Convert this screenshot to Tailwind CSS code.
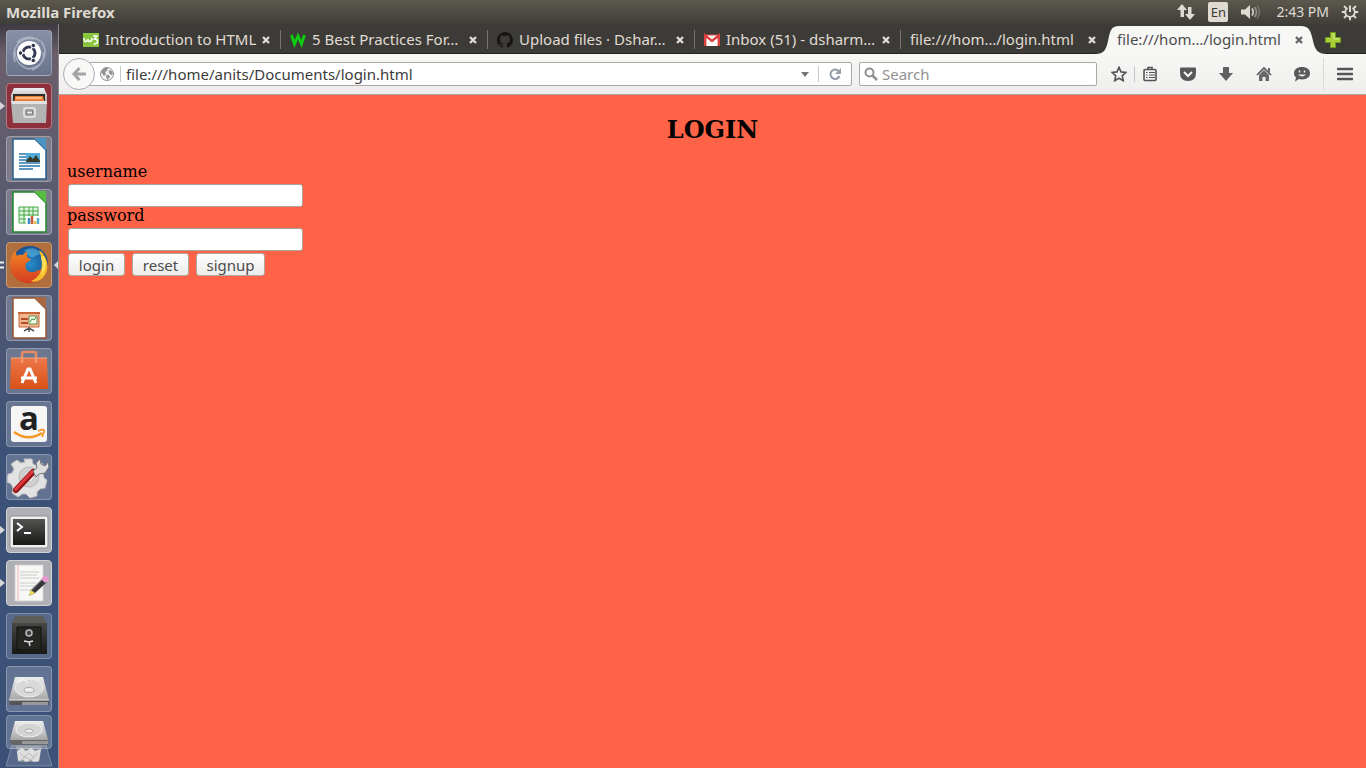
<!DOCTYPE html>
<html lang="en">
<head>
<meta charset="utf-8">
<title>Mozilla Firefox</title>
<script src="https://cdn.jsdelivr.net/npm/@tailwindcss/browser@4"></script>
</head>
<body class="flex h-screen flex-col overflow-hidden font-['Noto_Sans',sans-serif] text-[15px] text-[#3c3c3c]">

<!-- System panel -->
<header class="flex h-6 shrink-0 items-center bg-linear-to-b from-[#5c584f] to-[#403e39] px-1.5 text-[#dfdbd2]">
  <h1 class="flex-1 text-[15px] leading-6 font-bold">Mozilla Firefox</h1>
  <div class="flex items-center">
    <button aria-label="Network" class="mr-3"><svg class="h-5 w-[20px]" viewBox="0 0 20 20" fill="#dfdbd2"><path d="M6 2l5 6H8v7H4.500V8H1zM14 18l-5-6h3V5h3.500v7H19z"/></svg></button>
    <button class="mr-3 h-5 w-5 rounded-xs bg-[#dfdbd2] text-[13px] leading-5 text-[#3c3b37]">En</button>
    <button aria-label="Volume" class="mr-3.5"><svg class="h-5 w-[22px]" viewBox="0 0 22 20" fill="none" stroke-width="1.600"><path fill="#dfdbd2" d="M1 7.500h4l5-4.500v14l-5-4.500H1z"/><path stroke="#dfdbd2" d="M12 6.500q2.500 3.500 0 7"/><path stroke="#99958d" d="M14.500 5q4 5 0 10"/><path stroke="#77746c" d="M17 3.500q5 6.500 0 13"/></svg></button>
    <time class="mr-3 text-[14px] leading-6">2:43 PM</time>
    <button aria-label="System" class="mr-px"><svg class="h-[18px] w-[18px]" viewBox="0 0 18 18" fill="none" stroke="#dfdbd2"><path stroke-width="1.800" d="M6.500 5a4.800 4.800 0 1 0 5 0"/><path stroke-width="2" d="M9 2.500V9M.8 9H4M14 9h3.200M3 3l2.400 2.400M15 3l-2.400 2.400M3 15l2.400-2.400M15 15l-2.400-2.400M9 14v3.200"/></svg></button>
  </div>
</header>

<div class="flex min-h-0 flex-1">

<!-- Launcher -->
<nav aria-label="Launcher" class="relative flex w-[59px] shrink-0 flex-col gap-[7px] overflow-hidden border-r border-[#8d8790] bg-linear-to-b from-[#3e3a42] from-0% via-[#6a5f6a] via-[4%] to-[#3b5178] to-60% pt-1.5 pl-1.5">
  <svg class="absolute h-0 w-0" aria-hidden="true"><defs>
    <linearGradient id="metal" x2="0" y2="1"><stop stop-color="#eee"/><stop offset="1" stop-color="#a6a6a6"/></linearGradient>
    <linearGradient id="dark" x2="0" y2="1"><stop stop-color="#535351"/><stop offset="1" stop-color="#181816"/></linearGradient>
    <linearGradient id="bag" x2="0" y2="1"><stop stop-color="#ed7748"/><stop offset="1" stop-color="#d95118"/></linearGradient>
    <radialGradient id="sky"><stop stop-color="#2590cc"/><stop offset="1" stop-color="#184f91"/></radialGradient>
    <linearGradient id="fox" x2="0" y2="1"><stop stop-color="#f18523"/><stop offset="1" stop-color="#d43b1f"/></linearGradient>
  </defs></svg>

  <button aria-label="Search your computer" class="h-[46px] w-[46px] shrink-0 rounded-sm border border-white/25 bg-linear-to-b from-[#8790a6] to-[#69738c]">
    <svg class="h-11 w-11" viewBox="0 0 44 44" fill="none"><path d="M8 31C3 17 14 5 28 8M34 10c9 12 2 27-13 28M10 12c4-6 15-8 23-2M36 21c2 8-3 15-11 18M8 20c0 9 5 16 14 18" stroke="#c4cad6" stroke-width="1.500" opacity=".65"/><circle cx="22" cy="22" r="12" fill="#fff"/><circle cx="22" cy="22" r="6" stroke="#353b52" stroke-width="3"/><path d="M22 22H10M22 22l6-11M22 22l6 11" stroke="#fff" stroke-width="1.500"/><circle cx="13.500" cy="22" r="2.300" fill="#353b52" stroke="#fff"/><circle cx="26.300" cy="14.500" r="2.300" fill="#353b52" stroke="#fff"/><circle cx="26.300" cy="29.500" r="2.300" fill="#353b52" stroke="#fff"/><circle cx="22" cy="22" r="4.200" fill="#fff"/></svg>
  </button>

  <button aria-label="Files" class="relative h-[46px] w-[46px] shrink-0 rounded-sm border border-[#b77780] bg-[#8d303c]">
    <svg class="h-11 w-11" viewBox="0 0 44 44"><path d="M7 4h30l3 7v8H4v-8z" fill="url(#metal)"/><path d="M6 10h32v10H6z" fill="#332b28"/><path d="M8 12h28l2 8H7z" fill="#ed7d34"/><path d="M9 14h26" stroke="#f8d1a1" stroke-width="1.500"/><path d="M4 18h36l-1 21H6z" fill="#b4b3b3"/><path d="M4 17h36v3H5z" fill="#e2e2e2"/><rect x="17" y="24" width="11" height="9" rx="2" fill="#aaa" stroke="#ececec" stroke-width="1.500"/><path d="M19.500 27h6v3h-6z" fill="#eee" stroke="#777"/></svg>
    <svg class="absolute top-[18px] -left-[7px] h-2 w-[5px]" viewBox="0 0 5 8"><path d="M0 0l5 4-5 4z" fill="#d8d6d8"/></svg>
  </button>

  <button aria-label="LibreOffice Writer" class="h-[46px] w-[46px] shrink-0 rounded-sm border border-white/25 bg-white/20">
    <svg class="h-11 w-11" viewBox="0 0 44 44"><path d="M6 2h22l11 11v29H6z" fill="#fff" stroke="#235f8c" stroke-width="1.500"/><path d="M27 1h12v12z" fill="#4d94c3"/><path d="M12 17h7M12 20h7M12 23h7M12 26h21M12 29h21M12 32h14" stroke="#2876aa" stroke-width="1.700"/><path d="M19 16h14v9H19z" fill="#51abd8"/><path d="M19 24l4-5 3 3 3-4 4 6v1H19z" fill="#363b29"/></svg>
  </button>

  <button aria-label="LibreOffice Calc" class="h-[46px] w-[46px] shrink-0 rounded-sm border border-white/25 bg-white/20">
    <svg class="h-11 w-11" viewBox="0 0 44 44"><path d="M6 2h22l11 11v29H6z" fill="#fff" stroke="#208829" stroke-width="1.500"/><path d="M27 1h12v12z" fill="#56be42"/><path d="M12 17h19v16H12zM12 21h19M12 25h19M12 29h19M17 17v16M22 17v16M26 17v16" fill="#e2f4df" stroke="#42a644"/><path d="M19 26h14v9H19z" fill="#fff"/><path d="M22 34v-6" stroke="#3889c6" stroke-width="2.500"/><path d="M25 34v-8" stroke="#c75b35" stroke-width="2.500"/><path d="M28 34v-3" stroke="#e6b943" stroke-width="2.500"/><path d="M31 34v-6" stroke="#57abc7" stroke-width="2.500"/></svg>
  </button>

  <button aria-label="Firefox" class="relative h-[46px] w-[46px] shrink-0 rounded-sm border border-[#c49b78] bg-[#b06f3d]">
    <svg class="h-11 w-11" viewBox="0 0 44 44"><circle cx="23" cy="21" r="18" fill="url(#sky)"/><path d="M17 8c6-5 14-3 18 4-6-2-6 3-11 2-4 0-3-5-7-6z" fill="#59b9df" opacity=".6"/><path d="M33 8c13 12 9 29-7 32-11 2-22-5-23-17 0-6 2-12 5-15l2 5c2-2 4-1 6-1 1-2 3-3 5-3-2 3-1 4 0 6l3 1c-1 3-5 3-5 5-2 5 2 9 8 8 5-2 6-3 9-2-2 4-6 6-10 6 9 0 14-8 10-23z" fill="url(#fox)"/><path d="M32 7c10 8 12 23 1 30-4 2-7 2-9 1 12-5 13-17 8-31z" fill="#f7bc2c"/><path d="M37 13c3 7 2 14-3 20 2-8 2-13 0-19z" fill="#ffe45b"/></svg>
    <svg class="absolute top-[18px] -left-[7px] h-2 w-[5px]" viewBox="0 0 5 8"><path d="M0 1.500h4M0 6.500h4" stroke="#eee" stroke-width="2"/></svg>
    <svg class="absolute top-[18px] left-[47px] h-2 w-1" viewBox="0 0 4 8"><path d="M4 0L0 4l4 4z" fill="#d8d6d8"/></svg>
  </button>

  <button aria-label="LibreOffice Impress" class="h-[46px] w-[46px] shrink-0 rounded-sm border border-white/25 bg-white/20">
    <svg class="h-11 w-11" viewBox="0 0 44 44"><path d="M6 2h22l11 11v29H6z" fill="#fff" stroke="#97512f" stroke-width="1.500"/><path d="M27 1h12v12z" fill="#a96845"/><path d="M12 17h20v14H12z" fill="#f3b590" stroke="#c86638"/><path d="M11 17h22" stroke="#c86638" stroke-width="2"/><path d="M14 23h7M14 27h7" stroke="#b34d27" stroke-width="2"/><path d="M22 20h8v8h-8z" fill="#f5ffe8" stroke="#638d53"/><path d="M23 26l2-3 2 1 2-3" fill="none" stroke="#318745"/><path d="M17 35l5-3 5 3M22 31v5" fill="none" stroke="#555" stroke-width="1.500"/></svg>
  </button>

  <button aria-label="Ubuntu Software Center" class="h-[46px] w-[46px] shrink-0 rounded-sm border border-white/25 bg-white/20">
    <svg class="h-11 w-11" viewBox="0 0 44 44"><path d="M15 13V5q0-2 2-2h10q2 0 2 2v8" fill="none" stroke="#e98a61" stroke-width="2.500"/><path d="M4 9h36l1 31H3z" fill="url(#bag)"/><path d="M15 9v5M29 9v5" stroke="#f0946c" stroke-width="2.500"/><path d="M4 9h36" stroke="#f3a781"/><path d="M15 34l6-14h2l6 14M14 29h16" fill="none" stroke="#fff" stroke-width="3"/></svg>
  </button>

  <button aria-label="Amazon" class="h-[46px] w-[46px] shrink-0 rounded-sm border border-white/25 bg-white/20">
    <svg class="h-11 w-11 overflow-visible" viewBox="0 0 44 44"><rect x="4" y="4" width="36" height="36" rx="3" fill="#f6f6f6"/><text x="12" y="28" font-family="Open Sans, sans-serif" font-weight="bold" font-size="33" fill="#222">a</text><path d="M7 30q14 10 28 1" fill="none" stroke="#f49725" stroke-width="2.500"/><path d="M31 29q7-3 6 1l-2 5" fill="none" stroke="#f49725" stroke-width="1.800"/></svg>
  </button>

  <button aria-label="System Settings" class="h-[46px] w-[46px] shrink-0 rounded-sm border border-white/25 bg-white/20">
    <svg class="h-11 w-11" viewBox="0 0 44 44"><path d="M17 4h8l1 5 4 2 5-3 4 6-3 4 1 5 3 2-2 8-5 1-3 3v4l-7 2-4-4h-4l-4 3-6-4 1-5-2-4-4-2 1-8 4-1 2-4-3-5 6-4 4 3 4-1z" fill="#e2e2e2" stroke="#bbb"/><circle cx="22" cy="22" r="10" fill="#cfcfcf" stroke="#b7b7b7"/><circle cx="22" cy="22" r="4" fill="#eee"/><path d="M9 35l17-18" stroke="#8e1316" stroke-width="6" stroke-linecap="round"/><path d="M8.500 34.500l17-18" stroke="#dd383b" stroke-width="3" stroke-linecap="round"/><path d="M26 16l4-3-1-5 4-4 1 5 4 2 3-4 1 5-4 6-6 1-3 3z" fill="#ddd" stroke="#777"/></svg>
  </button>

  <button aria-label="Terminal" class="relative h-[46px] w-[46px] shrink-0 rounded-sm border border-[#d2d2d5] bg-[#aeb0b5]">
    <svg class="h-11 w-11" viewBox="0 0 44 44"><rect x="3" y="8" width="38" height="32" rx="2" fill="#eee" stroke="#919191"/><path d="M6 11h32v26H6z" fill="url(#dark)"/><path d="M10 15l5 4-5 4M17 25h7" fill="none" stroke="#fff" stroke-width="2"/></svg>
    <svg class="absolute top-[18px] -left-[7px] h-2 w-[5px]" viewBox="0 0 5 8"><path d="M0 0l5 4-5 4z" fill="#d8d6d8"/></svg>
  </button>

  <button aria-label="Text Editor" class="relative h-[46px] w-[46px] shrink-0 rounded-sm border border-[#d2d2d5] bg-[#aeb0b5]">
    <svg class="h-11 w-11" viewBox="0 0 44 44"><path d="M8 4h28v36H8z" fill="#f7f7f5" stroke="#d1d1d0"/><path d="M11 4v36" stroke="#f0b1b5"/><path d="M13 11h19M13 14h17M13 17h19M13 22h16M13 25h18M13 29h12" stroke="#ccc"/><path d="M22 35l2-6 12-12 4 4-12 11z" fill="#33363a"/><path d="M24 30l13-13" stroke="#777"/><path d="M34 18l3-3q2-1 4 1t0 4l-3 2z" fill="#e79cd0"/><path d="M24 29l4 3-6 3z" fill="#edda55"/></svg>
    <svg class="absolute top-[18px] -left-[7px] h-2 w-[5px]" viewBox="0 0 5 8"><path d="M0 0l5 4-5 4z" fill="#d8d6d8"/></svg>
  </button>

  <button aria-label="Passwords and Keys" class="h-[46px] w-[46px] shrink-0 rounded-sm border border-white/25 bg-white/15">
    <svg class="h-11 w-11" viewBox="0 0 44 44"><path d="M9 2h26l5 7v31H5V9z" fill="url(#dark)"/><path d="M5 9l4-7h26l5 7z" fill="#5c5d59"/><path d="M10 13h24v23H10z" fill="#262725" stroke="#11110f"/><circle cx="22" cy="19" r="3" fill="#444" stroke="#bbb" stroke-width="1.500"/><path d="M17 27l5 1 4-1M22 28l1 4" fill="none" stroke="#ddd" stroke-width="1.500"/></svg>
  </button>

  <button aria-label="Disk" class="h-[46px] w-[46px] shrink-0 rounded-sm border border-white/25 bg-white/20">
    <svg class="h-11 w-11" viewBox="0 0 44 44"><path d="M8 10h28l6 23H2z" fill="url(#metal)"/><path d="M2 33h40v5H3z" fill="#555"/><path d="M2 33h40" stroke="#eee"/><path d="M15 35h26v3H15z" fill="#999"/><ellipse cx="22" cy="21" rx="14" ry="9" fill="#d9d9d9" stroke="#eee"/><ellipse cx="22" cy="23" rx="5" ry="2.500" fill="#eee" stroke="#aaa"/><path d="M10 15q8-5 11 1" fill="none" stroke="#fff"/></svg>
  </button>

  <button aria-label="Disk and Trash" class="-mt-1 h-[53px] w-[46px] shrink-0">
    <svg class="h-[53px] w-[46px]" viewBox="0 0 46 53"><path d="M6 30h34l6 21H0z" fill="#ffffff24" stroke="#ffffff45"/><path d="M10 31h26l-3 16H13z" fill="#858d98"/><path d="M11 36l5-3 4 3 5-3 4 3 6-2-2 12-5 1-3-2-5 2-3-2-5 1z" fill="#dedede"/><path d="M14 38l4 4 5-4 4 4 5-4M15 45l5-3 4 3 5-3" stroke="#bbb" fill="none"/><rect x=".5" y=".5" width="45" height="33" rx="3" fill="#ffffff35" stroke="#ffffff50"/><path d="M9 6h28l5 19H4z" fill="url(#metal)"/><path d="M4 25h38v5H5z" fill="#666"/><path d="M16 26h26v3H16z" fill="#999"/><ellipse cx="23" cy="15" rx="13" ry="7" fill="#d4d4d4" stroke="#eee"/><ellipse cx="23" cy="16" rx="4" ry="2" fill="#eee" stroke="#aaa"/></svg>
  </button>
</nav>

<!-- Browser window -->
<div class="flex min-w-0 flex-1 flex-col">
  <div role="tablist" class="flex h-[30px] shrink-0 items-stretch border-b border-[#252422] bg-[#3c3b37] pt-0.5 pl-[15px] text-[#e0dcd4]">
    <div class="flex min-w-0 basis-[207px] items-center pr-[11px] pl-[9px]">
      <svg class="mr-1.5 h-4 w-4 shrink-0" viewBox="0 0 16 16" fill="none"><path fill="#8ac53e" d="M0 1h16v14H0z"/><path stroke="#fff" stroke-width="1.500" d="M1 6q0 4 2 3.500T5 7q0 3 2 2.500T9 6M10 4h4l-2.500 3q3 0 3 2.500t-4 2.500"/></svg>
      <button role="tab" class="min-w-0 flex-1 truncate text-left">Introduction to HTML</button>
      <button aria-label="Close tab"><svg class="h-2 w-2" viewBox="0 0 8 8"><path d="M1 1l6 6M7 1L1 7" stroke="#e0dcd4" stroke-width="2.400"/></svg></button>
    </div>
    <div class="my-1 w-px -ml-px shrink-0 bg-[#75736e]"></div>
    <div class="flex min-w-0 basis-[207px] items-center pr-[11px] pl-[9px]">
      <svg class="mr-1.5 h-4 w-4 shrink-0" viewBox="0 0 16 16"><path d="M1.500 3l3 9L8 4l3.500 8 3-9" fill="none" stroke="#0fce0f" stroke-width="2.800"/></svg>
      <button role="tab" class="min-w-0 flex-1 truncate text-left">5 Best Practices For…</button>
      <button aria-label="Close tab"><svg class="h-2 w-2" viewBox="0 0 8 8"><path d="M1 1l6 6M7 1L1 7" stroke="#e0dcd4" stroke-width="2.400"/></svg></button>
    </div>
    <div class="my-1 w-px -ml-px shrink-0 bg-[#75736e]"></div>
    <div class="flex min-w-0 basis-[207px] items-center pr-[11px] pl-[9px]">
      <svg class="mr-1.5 h-4 w-4 shrink-0" viewBox="0 0 16 16"><path fill="#171615" d="M8 0a8 8 0 0 0-2.500 15.600c.4.100.5-.2.500-.4v-1.500c-2.200.5-2.700-1-2.700-1-.4-.9-.9-1.200-.9-1.200-.7-.5.100-.5.100-.5.800.1 1.200.8 1.200.8.700 1.300 1.900.9 2.300.7.100-.5.300-.9.500-1.100-1.800-.2-3.600-.9-3.600-4 0-.9.300-1.600.8-2.100-.1-.2-.4-1 .1-2.100 0 0 .7-.2 2.200.8a8 8 0 0 1 4 0c1.500-1 2.200-.8 2.200-.8.400 1.100.2 1.900.1 2.100.5.600.8 1.300.8 2.100 0 3.100-1.900 3.700-3.600 3.900.3.300.5.800.5 1.500v2.400c0 .2.100.5.500.4A8 8 0 0 0 8 0z"/></svg>
      <button role="tab" class="min-w-0 flex-1 truncate text-left">Upload files · Dshar…</button>
      <button aria-label="Close tab"><svg class="h-2 w-2" viewBox="0 0 8 8"><path d="M1 1l6 6M7 1L1 7" stroke="#e0dcd4" stroke-width="2.400"/></svg></button>
    </div>
    <div class="my-1 w-px -ml-px shrink-0 bg-[#75736e]"></div>
    <div class="flex min-w-0 basis-[206px] items-center pr-[11px] pl-[9px]">
      <svg class="mr-1.5 h-4 w-4 shrink-0" viewBox="0 0 16 16"><path fill="#fff" d="M0 3h16v11H0z"/><path fill="none" stroke="#dc3f3c" stroke-width="2.400" d="M1.200 14V3.500L8 9l6.800-5.500V14"/><path d="M0 3h16" stroke="#dc3f3c"/></svg>
      <button role="tab" class="min-w-0 flex-1 truncate text-left">Inbox (51) - dsharm…</button>
      <button aria-label="Close tab"><svg class="h-2 w-2" viewBox="0 0 8 8"><path d="M1 1l6 6M7 1L1 7" stroke="#e0dcd4" stroke-width="2.400"/></svg></button>
    </div>
    <div class="my-1 w-px -ml-px shrink-0 bg-[#75736e]"></div>
    <div class="flex min-w-0 basis-[206px] items-center pr-[11px] pl-[9px]">
      <button role="tab" class="min-w-0 flex-1 truncate text-left">file:///hom…/login.html</button>
      <button aria-label="Close tab"><svg class="h-2 w-2" viewBox="0 0 8 8"><path d="M1 1l6 6M7 1L1 7" stroke="#e0dcd4" stroke-width="2.400"/></svg></button>
    </div>
    <div class="relative flex min-w-0 basis-[207px] items-center pr-[11px] pl-[10px] text-[#4c4c4c]">
      <svg class="absolute -top-0.5 -left-3 h-[30px] w-[232px]" viewBox="0 0 232 30"><path d="M0 30c9 0 11-4 13-13C15 7 16 2 24 2h182c8 0 10 5 12 15 2 9 5 13 14 13z" fill="#f7f7f6"/></svg>
      <button role="tab" aria-selected="true" class="relative min-w-0 flex-1 truncate text-left">file:///hom…/login.html</button>
      <button aria-label="Close tab" class="relative"><svg class="h-2 w-2" viewBox="0 0 8 8"><path d="M1 1l6 6M7 1L1 7" stroke="#666" stroke-width="2.400"/></svg></button>
    </div>
    <button aria-label="New tab" class="ml-[11px]"><svg class="h-4 w-4" viewBox="0 0 16 16"><path d="M5.500.5h5v5h5v5h-5v5h-5v-5h-5v-5h5z" fill="#a8cd39" stroke="#729b1e"/><path d="M7 2h2v5h5" fill="none" stroke="#d4e98c"/></svg></button>
  </div>

  <div class="flex h-[41px] shrink-0 items-center border-b border-[#a9a7a3] bg-linear-to-b from-[#f7f7f6] to-[#efeeec] pl-1">
    <button aria-label="Back" class="z-10 grid h-8 w-8 shrink-0 place-items-center rounded-full border border-[#a9adb4] bg-[#f8f8f7]"><svg class="h-4 w-4" viewBox="0 0 16 16" fill="none" stroke="#a4a4a4" stroke-width="3"><path d="M8.500 2L3 8l5.500 6M3 8h12"/></svg></button>
    <div class="-ml-4 flex h-6 min-w-0 flex-1 items-center rounded-xs border border-[#aaa9a6] bg-white pl-5">
      <svg class="h-3.5 w-3.5 shrink-0" viewBox="0 0 14 14"><circle cx="7" cy="7" r="6.500" fill="#f1f1f1" stroke="#929292"/><path d="M1 5l3-4 4 0-1 3-2 1 1 2-2 2zM6 8l3 0 1 2-3 3zM9 3l3 1 1 3-2 1-2-2z" fill="#929292"/></svg>
      <span class="ml-1.5 h-4 w-px shrink-0 bg-[#c8c8c8]"></span>
      <input aria-label="Address" value="file:///home/anits/Documents/login.html" class="ml-[5px] min-w-0 flex-1 bg-transparent outline-none">
      <button aria-label="History" class="mr-2"><svg class="h-2 w-2.5" viewBox="0 0 10 8"><path d="M1 2h8L5 7z" fill="#777"/></svg></button>
      <span class="h-4 w-px bg-[#c8c8c8]"></span>
      <button aria-label="Reload" class="mx-[9px]"><svg class="h-3.5 w-3.5" viewBox="0 0 14 14"><path d="M11 4.500A4.700 4.700 0 1 0 11.500 9" fill="none" stroke="#929da8" stroke-width="2"/><path d="M13 1v6H7z" fill="#929da8"/></svg></button>
    </div>
    <label class="ml-[7px] flex h-6 w-[238px] shrink-0 items-center rounded-xs border border-[#aaa9a6] bg-white">
      <svg class="mx-1 h-3.5 w-3.5" viewBox="0 0 14 14" fill="none" stroke="#929292"><circle cx="5.500" cy="5.500" r="4" stroke-width="2"/><path d="M8.500 8.500L13 13" stroke-width="2.600"/></svg>
      <input aria-label="Search" placeholder="Search" class="min-w-0 flex-1 bg-transparent outline-none placeholder:text-[#929292]">
    </label>
    <div class="ml-[7px] flex h-full shrink-0 items-center">
      <button aria-label="Bookmark" class="grid w-[30px] place-items-center"><svg class="h-4 w-4" viewBox="0 0 16 16"><path d="M8 1.300l2 4.600 5 .500-3.800 3.400 1.100 4.900L8 12.200l-4.300 2.500 1.100-4.900L1 6.400l5-.500z" fill="none" stroke="#555" stroke-width="1.600"/></svg></button>
      <span class="h-4 w-px bg-[#c4c8cc]"></span>
      <button aria-label="Bookmarks list" class="mr-1 grid w-[30px] place-items-center"><svg class="h-4 w-4" viewBox="0 0 16 16" fill="none" stroke="#555"><path d="M6 3V1.500h4V3" stroke-width="1.600"/><rect x="2" y="3.500" width="12" height="11" rx="1" stroke-width="1.600"/><path d="M4 6.500h1.500M4 9h1.500M4 11.500h1.500M7 6.500h6M7 9h6M7 11.500h6" stroke-width="1.200"/></svg></button>
      <button aria-label="Pocket" class="grid w-[38px] place-items-center"><svg class="h-4 w-4" viewBox="0 0 16 16"><path d="M1 1.500h14q1 0 1 1V7q0 8-8 8T0 7V2.500q0-1 1-1z" fill="#585858"/><path d="M4 6l4 4 4-4" fill="none" stroke="#f5f5f5" stroke-width="2"/></svg></button>
      <button aria-label="Downloads" class="grid w-[38px] place-items-center"><svg class="h-4 w-4" viewBox="0 0 16 16"><path d="M5 1h6v6h4l-7 8-7-8h4z" fill="#606060"/></svg></button>
      <button aria-label="Home" class="grid w-[38px] place-items-center"><svg class="h-4 w-4" viewBox="0 0 16 16"><path d="M1 9l7-7 7 7" fill="none" stroke="#585858" stroke-width="1.600"/><path d="M3 9l5-5 5 5v6H9.500v-4h-3v4H3zM12 2h2v5l-2-2z" fill="#686868"/></svg></button>
      <button aria-label="Chat" class="grid w-[38px] place-items-center"><svg class="h-4 w-4" viewBox="0 0 16 16"><path d="M8 1c5 0 8 2.500 8 6.300 0 4-3.500 6.200-8 6.200-1 0-2 0-3-.4L1 15.500l1-4C.7 10.500 0 9 0 7.300 0 3.500 3 1 8 1z" fill="#595959"/><path d="M5.500 4.500v2M10.500 4.500v2" stroke="#f5f5f5" stroke-width="1.500"/><path d="M4 8.500h8q-4 4-8 0z" fill="#f5f5f5"/></svg></button>
      <span class="ml-[2px] h-8 w-px bg-[#dad9d7]"></span>
      <button aria-label="Menu" class="grid w-[42px] place-items-center"><svg class="h-4 w-4" viewBox="0 0 16 16"><path d="M1 3h14M1 8h14M1 13h14" stroke="#555" stroke-width="2.600" stroke-linecap="round"/></svg></button>
    </div>
  </div>

  <main class="flex-1 bg-[#ff6347] px-2 pt-5 font-['DejaVu_Serif',serif] text-[16px] text-black">
    <h2 class="text-center text-[24px] leading-[30px] font-bold">LOGIN</h2>
    <form class="mt-[18px]">
      <label for="username" class="block leading-[18px]">username</label>
      <input id="username" type="text" class="mt-[3px] ml-px block h-[23px] w-[235px] rounded-[3px] border border-[#a9a39f] bg-white px-1 font-['Noto_Sans',sans-serif] text-[15px] outline-none">
      <label for="password" class="block leading-[18px]">password</label>
      <input id="password" type="password" class="mt-[3px] ml-px block h-[23px] w-[235px] rounded-[3px] border border-[#a9a39f] bg-white px-1 font-['Noto_Sans',sans-serif] text-[15px] outline-none">
      <div class="mt-0.5 ml-px flex gap-[7px] font-['Noto_Sans',sans-serif] text-[15px] text-[#4c4c4c]">
        <button type="button" class="h-[23px] w-[57px] rounded-[3px] border border-[#b5a8a2] bg-linear-to-b from-white to-[#ececeb] leading-5">login</button>
        <button type="reset" class="h-[23px] w-[57px] rounded-[3px] border border-[#b5a8a2] bg-linear-to-b from-white to-[#ececeb] leading-5">reset</button>
        <button type="button" class="h-[23px] w-[69px] rounded-[3px] border border-[#b5a8a2] bg-linear-to-b from-white to-[#ececeb] leading-5">signup</button>
      </div>
    </form>
  </main>
</div>
</div>
</body>
</html>
